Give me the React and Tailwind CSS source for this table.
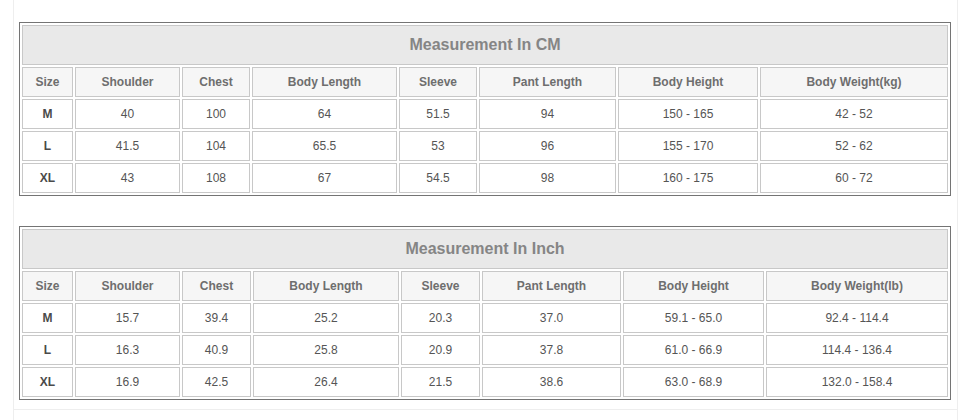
const headers = [
  "Size",
  "Shoulder",
  "Chest",
  "Body Length",
  "Sleeve",
  "Pant Length",
  "Body Height",
];

const charts = [
  {
    title: "Measurement In CM",
    weight: "Body Weight(kg)",
    cols: "grid-cols-[51px_105px_68px_145px_78px_137px_140px_188px]",
    rows: [
      ["M", "40", "100", "64", "51.5", "94", "150 - 165", "42 - 52"],
      ["L", "41.5", "104", "65.5", "53", "96", "155 - 170", "52 - 62"],
      ["XL", "43", "108", "67", "54.5", "98", "160 - 175", "60 - 72"],
    ],
  },
  {
    title: "Measurement In Inch",
    weight: "Body Weight(lb)",
    cols: "grid-cols-[51px_105px_69px_146px_79px_139px_141px_182px]",
    rows: [
      ["M", "15.7", "39.4", "25.2", "20.3", "37.0", "59.1 - 65.0", "92.4 - 114.4"],
      ["L", "16.3", "40.9", "25.8", "20.9", "37.8", "61.0 - 66.9", "114.4 - 136.4"],
      ["XL", "16.9", "42.5", "26.4", "21.5", "38.6", "63.0 - 68.9", "132.0 - 158.4"],
    ],
  },
];

function SizeChart({ chart }) {
  return (
    <div
      className={`grid ${chart.cols} gap-[2px] p-[2px] w-[932px] border border-[#747474]`}
    >
      <div className="col-span-8 h-[40px] flex items-center justify-center bg-[#e9e9e9] border border-[#c8c8c8] text-[16px] font-bold text-[#858585]">
        {chart.title}
      </div>
      {[...headers, chart.weight].map((h) => (
        <div
          key={h}
          className="h-[30px] flex items-center justify-center bg-[#f6f6f6] border border-[#c8c8c8] text-[12px] font-bold text-[#6e6e6e]"
        >
          {h}
        </div>
      ))}
      {chart.rows.map((row) =>
        row.map((cell, i) => (
          <div
            key={row[0] + i}
            className={
              "h-[30px] flex items-center justify-center bg-white border border-[#c8c8c8] text-[12px] " +
              (i === 0 ? "font-bold text-[#4a4a4a]" : "text-[#555555]")
            }
          >
            {cell}
          </div>
        ))
      )}
    </div>
  );
}

export default function App() {
  return (
    <div className="w-[968px] h-[420px] bg-white overflow-hidden font-['Liberation_Sans',Arial,sans-serif]">
      <div className="ml-[13px] w-[945px] h-[410px] border-x border-b border-[#eeeeee] pl-[5px] pt-[22px] flex flex-col gap-[30px]">
        {charts.map((c) => (
          <SizeChart key={c.title} chart={c} />
        ))}
      </div>
      <div className="ml-[13px] w-[945px] h-[10px] border-x border-[#eeeeee]" />
    </div>
  );
}
